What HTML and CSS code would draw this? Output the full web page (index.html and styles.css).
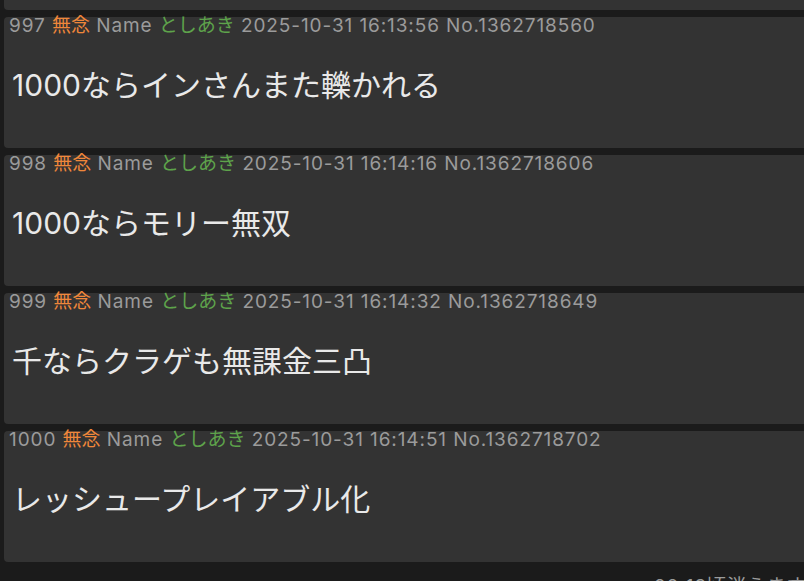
FILE: index.html
```html
<!DOCTYPE html>
<html lang="ja">
<head>
  <meta charset="UTF-8">
  <meta name="viewport" content="width=device-width, initial-scale=1.0">
  <title>スレッド</title>
  <link rel="stylesheet" href="styles.css">
</head>
<body>
  <div class="thread">
    <div class="post post-cut"></div>

    <div class="post">
      <div class="post-head">
        <span class="num">997</span>
        <span class="subject">無念</span>
        <span class="label">Name</span>
        <span class="name">としあき</span>
        <span class="date">2025-10-31 16:13:56</span>
        <span class="no">No.1362718560</span>
      </div>
      <div class="post-body">1000ならインさんまた轢かれる</div>
    </div>

    <div class="post">
      <div class="post-head">
        <span class="num">998</span>
        <span class="subject">無念</span>
        <span class="label">Name</span>
        <span class="name">としあき</span>
        <span class="date">2025-10-31 16:14:16</span>
        <span class="no">No.1362718606</span>
      </div>
      <div class="post-body">1000ならモリー無双</div>
    </div>

    <div class="post">
      <div class="post-head">
        <span class="num">999</span>
        <span class="subject">無念</span>
        <span class="label">Name</span>
        <span class="name">としあき</span>
        <span class="date">2025-10-31 16:14:32</span>
        <span class="no">No.1362718649</span>
      </div>
      <div class="post-body">千ならクラゲも無課金三凸</div>
    </div>

    <div class="post">
      <div class="post-head">
        <span class="num">1000</span>
        <span class="subject">無念</span>
        <span class="label">Name</span>
        <span class="name">としあき</span>
        <span class="date">2025-10-31 16:14:51</span>
        <span class="no">No.1362718702</span>
      </div>
      <div class="post-body">レッシュープレイアブル化</div>
    </div>

    <div class="expire">20:13頃消えます</div>
  </div>
</body>
</html>
```

FILE: styles.css
```css
html, body {
  overflow: hidden;
}
body {
  margin: 0;
  background: #1b1b1b;
  font-family: Inter, "Noto Sans CJK JP", sans-serif;
  color: #9b9b9b;
}
.thread {
  padding-left: 4px;
}
.post {
  background: #333333;
  border-radius: 4px 0 0 4px;
  height: 131px;
  margin-bottom: 7px;
  box-sizing: border-box;
  padding: 0 0 0 5px;
}
.post-cut {
  height: 10px;
  border-radius: 0 0 0 4px;
}
.post-head {
  font-size: 19px;
  line-height: 18px;
  letter-spacing: 0.9px;
  white-space: nowrap;
}
.subject,
.name {
  letter-spacing: 0;
}
.subject {
  color: #f0873a;
}
.name {
  color: #5ea34b;
}
.post-body {
  margin-top: 30px;
  padding-left: 3px;
  font-size: 30px;
  line-height: 40px;
  color: #e9e9e9;
  white-space: nowrap;
}
.expire {
  margin-top: 13px;
  padding-left: 650px;
  font-size: 19px;
  line-height: 24px;
  letter-spacing: 0.9px;
  white-space: nowrap;
}
```
